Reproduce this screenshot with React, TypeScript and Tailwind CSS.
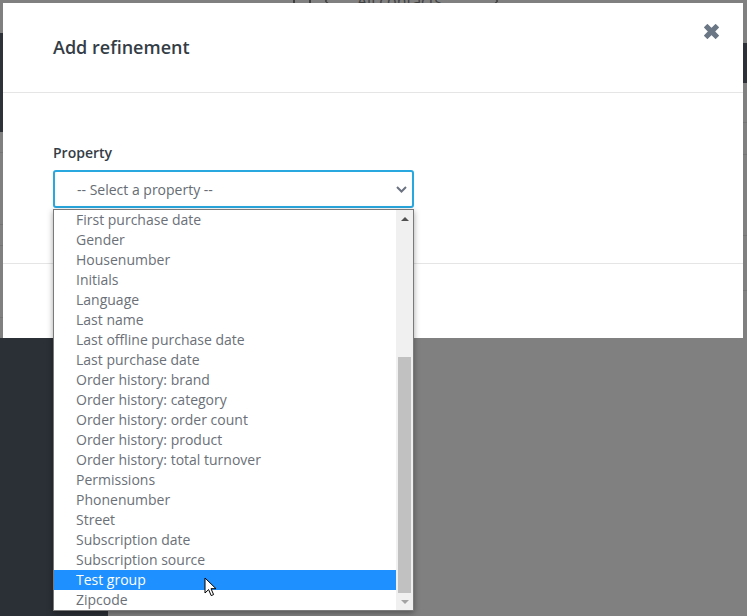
import { FaChevronLeft, FaChevronRight } from "react-icons/fa6";

const properties = [
  "First purchase date",
  "Gender",
  "Housenumber",
  "Initials",
  "Language",
  "Last name",
  "Last offline purchase date",
  "Last purchase date",
  "Order history: brand",
  "Order history: category",
  "Order history: order count",
  "Order history: product",
  "Order history: total turnover",
  "Permissions",
  "Phonenumber",
  "Street",
  "Subscription date",
  "Subscription source",
  "Test group",
  "Zipcode",
];

const selected = "Test group";

function CloseIcon() {
  return (
    <svg width="17" height="17" viewBox="0 0 17 17" className="text-[#6b7785]">
      <path
        d="M1.6 4.4 L4.4 1.6 L8.5 5.7 L12.6 1.6 L15.4 4.4 L11.3 8.5 L15.4 12.6 L12.6 15.4 L8.5 11.3 L4.4 15.4 L1.6 12.6 L5.7 8.5 Z"
        fill="currentColor"
        stroke="currentColor"
        strokeWidth="1.2"
        strokeLinejoin="round"
      />
    </svg>
  );
}

function Chevron() {
  return (
    <svg width="11" height="7" viewBox="0 0 11 7" className="text-[#6b7280]">
      <path d="M1 1 L5.5 5.5 L10 1" fill="none" stroke="currentColor" strokeWidth="2" />
    </svg>
  );
}

function Pointer() {
  return (
    <svg width="14" height="21" viewBox="0 0 14 21">
      <path
        d="M1 1 L1 16 L4.6 12.6 L7.2 18.6 L9.6 17.6 L7 11.7 L12 11.7 Z"
        fill="#fff"
        stroke="#000"
        strokeWidth="1"
        strokeLinejoin="round"
      />
    </svg>
  );
}

// native-looking scrollbar, scrolled to the end of the list
function Scrollbar() {
  return (
    <div className="w-[17px] flex flex-col bg-[#f0f0f0]">
      <div className="h-[17px] flex items-center justify-center">
        <div className="w-0 h-0 border-x-[4px] border-x-transparent border-b-[4px] border-b-[#505050]"></div>
      </div>
      <div className="flex-1 flex flex-col justify-end">
        <div className="h-[236px] mx-[2px] bg-[#c1c1c1]"></div>
      </div>
      <div className="h-[17px] flex items-center justify-center">
        <div className="w-0 h-0 border-x-[4px] border-x-transparent border-t-[4px] border-t-[#a3a3a3]"></div>
      </div>
    </div>
  );
}

function PropertySelect() {
  return (
    <div className="relative w-[361px]">
      <div className="h-[38px] border-2 border-[#29a8e0] rounded-[3px] flex items-center justify-between pl-[22px] pr-[5px] text-[14px] text-[#666c73]">
        <span>-- Select a property --</span>
        <Chevron />
      </div>

      {/* open option list */}
      <div className="absolute left-0 top-full mt-[1px] w-[361px] h-[402px] flex border border-[#7a7a7a] bg-white shadow-[0_2px_6px_rgba(0,0,0,0.35)] z-10">
        <ul className="flex-1">
          {properties.map((p) => (
            <li
              key={p}
              className={
                p === selected
                  ? "relative h-[20px] leading-[20px] pl-[22px] text-[14px] bg-[#1e90ff] text-white"
                  : "h-[20px] leading-[20px] pl-[22px] text-[14px] text-[#6b7078]"
              }
            >
              {p}
              {p === selected && (
                <div className="absolute left-[150px] top-[7px]">
                  <Pointer />
                </div>
              )}
            </li>
          ))}
        </ul>
        <Scrollbar />
      </div>
    </div>
  );
}

function Backdrop() {
  return (
    <div className="flex w-full h-full">
      {/* left sidebar */}
      <div className="w-[108px] flex flex-col">
        <div className="h-[33px] bg-[#808080]"></div>
        <div className="h-[99px] bg-[#2c3238]"></div>
        <div className="h-[206px] flex flex-col bg-[#808080]">
          <div className="h-[21px] border-b border-[#747474]"></div>
          <div className="h-[72px] border-b border-[#747474]"></div>
          <div className="h-[21px] border-b border-[#747474]"></div>
          <div className="h-[72px] border-b border-[#747474]"></div>
        </div>
        <div className="flex-1 bg-[#2b3036]"></div>
      </div>

      {/* main area */}
      <div className="flex-1 flex flex-col">
        <div className="h-[43px] bg-[#808080] overflow-hidden">
          <div className="flex items-center gap-3 pl-[185px] -mt-[11px] text-[16px] text-[#3f3f3f]">
            <div className="w-[18px] h-[14px] border-2 border-[#3f3f3f]"></div>
            <FaChevronLeft size={10} />
            <span className="ml-3">All contacts</span>
            <FaChevronRight size={10} className="ml-9" />
          </div>
        </div>
        <div className="h-[40px] bg-[#2c3238]"></div>
        <div className="flex-1 flex flex-col bg-[#808080]">
          <div className="h-[40px] border-b border-[#747474]"></div>
          <div className="h-[32px] border-b border-[#747474]"></div>
          <div className="h-[81px] border-b border-[#747474]"></div>
          <div className="h-[55px] border-b border-[#747474]"></div>
        </div>
      </div>
    </div>
  );
}

export default function App() {
  return (
    <div className="relative w-[747px] h-[616px] overflow-hidden bg-[#808080] font-['Open_Sans',sans-serif]">
      <Backdrop />

      {/* modal */}
      <div className="absolute left-[3px] top-[3px] w-[740px] h-[335px] bg-white flex flex-col">
        <div className="h-[90px] flex items-center px-[50px] border-b border-[#e5e5e5]">
          <h2 className="text-[18px] font-semibold text-[#343d46]">Add refinement</h2>
          <button className="absolute right-[23px] top-[20px]">
            <CloseIcon />
          </button>
        </div>

        <div className="h-[171px] px-[50px] pt-[49px] border-b border-[#e5e5e5]">
          <label className="block h-[20px] mb-[8px] text-[14px] font-semibold text-[#343d46]">
            Property
          </label>
          <PropertySelect />
        </div>

        <div className="flex-1"></div>
      </div>
    </div>
  );
}
